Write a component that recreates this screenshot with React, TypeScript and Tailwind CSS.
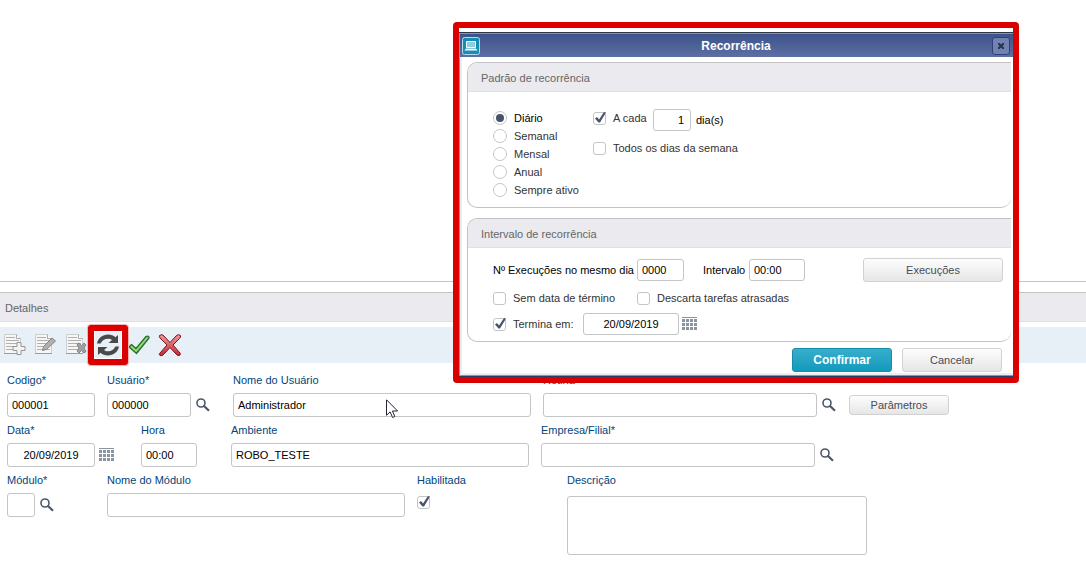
import React from "react";

const inputClass = "h-6 rounded-[3px] border border-[#c3c5c6] bg-white px-1 text-[11px] text-black outline-none";
const greyButton =
    "rounded-[3px] border border-[#d2d2d2] bg-gradient-to-b from-[#fdfdfd] to-[#e6e6e6] text-[11px] text-[#474c57]";

const SearchIcon = () => (
    <svg width="14" height="14" viewBox="0 0 14 14" fill="none" stroke="#4b576b">
        <circle cx="5" cy="5" r="4" strokeWidth="1.600" />
        <path d="M7.500 7.500L13 12.700" strokeWidth="2.200" />
    </svg>
);

const CalendarIcon = () => (
    <svg width="15" height="14" viewBox="0 0 15 14" fill="#8b94a3">
        <rect width="15" height="1" />
        {[2, 6, 10].map((y) => [0, 4, 8, 12].map((x) => <rect key={`${x}-${y}`} x={x} y={y} width="3" height="3" />))}
    </svg>
);

const SheetIcon = ({ children }: { children: React.ReactNode }) => (
    <svg width="22" height="22" viewBox="0 0 22 22">
        <path d="M.5 .5h12l4 4v15H.5z" fill="#f6f6f6" stroke="#cdcdcd" />
        <path d="M12.500 .5v4h4" fill="#fff" stroke="#a9a9a9" />
        <path d="M2 3.500h9M2 6.500h13M2 9.500h13M2 12.500h13M2 15.500h13" stroke="#b0b0b0" />
        <path d="M0 19.500h17" stroke="#9c9c9c" />
        {children}
    </svg>
);

const RefreshIcon = () => (
    <svg width="24" height="24" viewBox="0 0 24 24" fill="#4a4a4a">
        <path d="M1 10.500C2 5 6.500 1.500 12 1.500c3 0 5.500 1 7.500 2.700L22 2v8h-9.500l3.500-3c-1-.8-2.400-1.300-4-1.300-3.500 0-6 1.800-7.300 4.800z" />
        <path d="M23 13.500c-1 5.500-5.500 9-11 9-3 0-5.500-1-7.500-2.700L2 22v-8h9.500L8 17c1 .8 2.400 1.300 4 1.300 3.500 0 6-1.800 7.300-4.800z" />
    </svg>
);

const CheckIcon = () => (
    <svg width="22" height="20" viewBox="0 0 22 20">
        <path d="M1 12l2.500-2.500L8 13.500 18 1.500c1.500-1 3.500 0 3 1.500L8.500 18.500z" fill="#7cc85c" stroke="#23702a" strokeWidth="1.200" strokeLinejoin="round" />
        <path d="M3 11.500l5 4.300L19 3" fill="none" stroke="#b4e39b" />
    </svg>
);

const CrossIcon = () => (
    <svg width="24" height="24" viewBox="0 0 24 24">
        <defs>
            <linearGradient id="cross" x1="0" y1="0" x2="0" y2="1">
                <stop offset="0" stopColor="#ee9a98" />
                <stop offset="1" stopColor="#d02434" />
            </linearGradient>
        </defs>
        <path d="M1.500 2.500Q4 .5 6 3l6 6.500L18 3q2.500-2.500 4.500-.5.5 1.500-1 3L15 12l7 8q1 1.500-.5 2.500-2 .5-3.500-1.500l-6-6.500L6 21q-2 2.500-4 1.500-1.500-1 0-2.500L9 12 2 5Q1 3.500 1.500 2.500z" fill="url(#cross)" stroke="#6d1a22" />
    </svg>
);

interface CheckProps {
    id: string;
    checked?: boolean;
}

const Check = ({ id, checked }: CheckProps) => (
    <span className="relative block size-[13px] shrink-0">
        <input
            id={id}
            type="checkbox"
            defaultChecked={checked}
            className="peer block size-[13px] appearance-none rounded-[3px] border border-[#c3c5c6] bg-white"
        />
        <svg className="pointer-events-none absolute -top-px left-0 hidden peer-checked:block" width="14" height="14" viewBox="0 0 14 14" fill="#46536a">
            <path d="M2 7.500L4 6l2 2.500L11 1l2 .5L7 11.500H5.500z" />
        </svg>
    </span>
);

interface FieldProps {
    id: string;
    label: string;
    value?: string;
    width: string;
    align?: string;
    after?: React.ReactNode;
}

const Field = ({ id, label, value = "", width, align = "", after }: FieldProps) => (
    <div>
        <label htmlFor={id} className="block h-[14px] leading-[14px] whitespace-nowrap text-[#00457c]">{label}</label>
        <div className="mt-1.5 flex items-center gap-1">
            <input id={id} type="text" defaultValue={value} className={`${inputClass} ${width} ${align}`} />
            {after}
        </div>
    </div>
);

const LookupButton = ({ label }: { label: string }) => (
    <button type="button" aria-label={label} className="pl-px"><SearchIcon /></button>
);

const DateButton = ({ label }: { label: string }) => (
    <button type="button" aria-label={label}><CalendarIcon /></button>
);

const Group = ({ title, children }: { title: string; children: React.ReactNode }) => (
    <section className="overflow-hidden rounded-l-[10px] rounded-br-[10px] border border-r-0 border-[#c3c3c5] bg-white">
        <h3 className="h-[29px] border-b border-[#e0e0e4] bg-[#ebeaef] pl-[13px] leading-[30px] text-[#666]">{title}</h3>
        {children}
    </section>
);

const RecurrenceDialog = () => {
    const patterns = ["Diário", "Semanal", "Mensal", "Anual", "Sempre ativo"];

    return (
        <div role="dialog" aria-labelledby="dialog-title" className="absolute top-[22px] left-[453px] w-[566px] rounded-[4px] border-6 border-[#db0000] bg-white pt-1">
            <div className="border-t border-b border-t-[#30363f] border-b-[#263b70] bg-white">
                <div className="border-b border-l border-[#6d9bd2]">
                    <header className="flex h-6 items-center border-t border-[#8095bd] bg-gradient-to-b from-[#3d528c] to-[#5d70a3] pr-[3px] pl-0.5">
                        <svg width="18" height="18" viewBox="0 0 18 18">
                            <rect x=".5" y=".5" width="17" height="17" rx="2" fill="#168eb3" stroke="#b5dbe9" />
                            <path d="M4.500 4.500h9v6h-9z" fill="#8fcde1" stroke="#fff" />
                            <path d="M2.500 13.500h13l-1.500-2H4z" fill="#fff" />
                        </svg>
                        <h2 id="dialog-title" className="flex-1 text-center text-[12px] font-bold text-white">Recorrência</h2>
                        <button type="button" aria-label="Fechar" className="flex h-[18px] w-[18px] items-center justify-center rounded-[3px] border border-[#2d427b] bg-[#7182b0]">
                            <svg width="6" height="6" viewBox="0 0 6 6" stroke="#273252" strokeWidth="2">
                                <path d="M0 0l6 6M6 0L0 6" />
                            </svg>
                        </button>
                    </header>

                    <div className="flex flex-col gap-2.5 border-b-2 border-l-2 border-[#eeeeef] pt-[5px] pr-0.5 pl-[5px]">
                        <Group title="Padrão de recorrência">
                            <div className="flex h-[115px] pt-[17px] pl-[25px] text-[#333]">
                                <div role="radiogroup" className="w-[100px]">
                                    {patterns.map((pattern, i) => (
                                        <label key={pattern} className="flex h-[18px] items-center gap-[7px] whitespace-nowrap first:text-black">
                                            <input
                                                type="radio"
                                                name="pattern"
                                                defaultChecked={i === 0}
                                                className="size-[14px] appearance-none rounded-full border border-[#c3c5c6] bg-white bg-clip-content p-[2px] checked:bg-[#46536a]"
                                            />
                                            {pattern}
                                        </label>
                                    ))}
                                </div>
                                <div>
                                    <div className="flex items-start">
                                        <div className="flex h-[18px] items-center">
                                            <Check id="every" checked />
                                            <label htmlFor="every" className="w-[47px] pl-[7px]">A cada</label>
                                        </div>
                                        <input type="text" aria-label="Dias" defaultValue="1" className={`${inputClass} h-[22px] w-[38px] pr-1.5 text-right`} />
                                        <span className="pl-[5px] leading-[22px] text-black">dia(s)</span>
                                    </div>
                                    <div className="mt-2 flex h-[18px] items-center">
                                        <Check id="weekdays" />
                                        <label htmlFor="weekdays" className="pl-[7px]">Todos os dias da semana</label>
                                    </div>
                                </div>
                            </div>
                        </Group>

                        <Group title="Intervalo de recorrência">
                            <div className="h-[93px] pt-2.5 pr-2 pl-[25px] text-[#333]">
                                <div className="flex h-6 items-center text-black">
                                    <label htmlFor="runs" className="w-36 whitespace-nowrap">Nº Execuções no mesmo dia</label>
                                    <input id="runs" type="text" defaultValue="0000" className={`${inputClass} h-[22px] w-[47px]`} />
                                    <label htmlFor="interval" className="ml-[19px] w-[46px]">Intervalo</label>
                                    <input id="interval" type="text" defaultValue="00:00" className={`${inputClass} h-[22px] w-14`} />
                                    <button type="button" className={`${greyButton} ml-auto h-6 w-[140px]`}>Execuções</button>
                                </div>
                                <div className="mt-[7px] flex h-[18px] items-center">
                                    <Check id="endless" />
                                    <label htmlFor="endless" className="w-[131px] pl-[7px]">Sem data de término</label>
                                    <Check id="discard" />
                                    <label htmlFor="discard" className="pl-[7px]">Descarta tarefas atrasadas</label>
                                </div>
                                <div className="mt-1.5 flex h-[22px] items-center">
                                    <Check id="ends" checked />
                                    <label htmlFor="ends" className="w-[77px] pl-[7px]">Termina em:</label>
                                    <input type="text" aria-label="Data de término" defaultValue="20/09/2019" className={`${inputClass} mr-[3px] h-[22px] w-24 text-center`} />
                                    <DateButton label="Escolher data de término" />
                                </div>
                            </div>
                        </Group>

                        <footer className="-mt-1 flex justify-end gap-2.5 pr-[9px] pb-px">
                            <button type="button" className="h-6 w-[100px] rounded-[3px] border border-[#168baa] bg-gradient-to-b from-[#36aecd] to-[#109abc] text-[12px] font-bold text-white">Confirmar</button>
                            <button type="button" className={`${greyButton} h-6 w-[100px]`}>Cancelar</button>
                        </footer>
                    </div>
                </div>
            </div>
        </div>
    );
};

export default function App() {
    return (
        <div className="relative min-h-screen overflow-hidden bg-white font-['Liberation_Sans',Arial,sans-serif] text-[11px] leading-[14px]">
            <div className="h-[282px] border-b border-[#c3c3c3]" />

            <main className="mt-2.5 border-t border-[#c3c3c3]">
                <h1 className="h-[29px] border-b border-[#e0e0e4] bg-[#ebeaef] pl-[5px] leading-[30px] text-[#666]">Detalhes</h1>

                <div className="mt-[5px] flex h-9 items-center bg-[#e7eff7] pl-1">
                    <button type="button" aria-label="Incluir" className="mr-[9px]">
                        <SheetIcon>
                            <path d="M13 8.500h4v4h4v4h-4v4h-4v-4H9v-4h4z" fill="#f4f4f4" stroke="#969696" />
                        </SheetIcon>
                    </button>
                    <button type="button" aria-label="Alterar" className="mr-[9px]">
                        <SheetIcon>
                            <path d="M7.500 16.500l1-4L17 4l3.500 3-9 8.500z" fill="#b0b0b0" stroke="#858585" />
                        </SheetIcon>
                    </button>
                    <button type="button" aria-label="Excluir" className="mr-2">
                        <SheetIcon>
                            <path d="M11 10l2-1 2.500 2.500L18 9l2 2-2 3 2 3.500-2 1.500-2.500-2.500L13 19l-2-2 2-3z" fill="#a0a0a0" stroke="#858585" />
                        </SheetIcon>
                    </button>
                    <button type="button" aria-label="Recorrência" className="relative mr-2">
                        <RefreshIcon />
                        <span className="absolute -inset-x-2 -inset-y-2 rounded-[3px] border-6 border-[#db0000] ring-1 ring-[#f3b4b6] inset-ring-1 inset-ring-white" />
                    </button>
                    <button type="button" aria-label="Confirmar" className="mr-2"><CheckIcon /></button>
                    <button type="button" aria-label="Cancelar"><CrossIcon /></button>
                </div>

                <form className="mt-2.5 flex flex-col gap-1.5 pl-[7px]">
                    <div className="flex items-end">
                        <div className="flex gap-3">
                            <Field id="code" label="Codigo*" value="000001" width="w-[88px]" />
                            <Field id="user" label="Usuário*" value="000000" width="w-[84px]" after={<LookupButton label="Buscar usuário" />} />
                        </div>
                        <div className="ml-[23px] flex gap-3">
                            <Field id="user-name" label="Nome do Usuário" value="Administrador" width="w-[298px]" />
                            <Field id="routine" label="Rotina" width="w-[274px]" after={<LookupButton label="Buscar rotina" />} />
                        </div>
                        <button type="button" className={`${greyButton} mb-0.5 ml-[13px] h-5 w-[100px]`}>Parâmetros</button>
                    </div>

                    <div className="flex items-end">
                        <Field id="date" label="Data*" value="20/09/2019" width="w-[88px]" align="text-center" after={<DateButton label="Escolher data" />} />
                        <div className="ml-[27px]">
                            <Field id="time" label="Hora" value="00:00" width="w-14" />
                        </div>
                        <div className="ml-[34px] flex gap-3">
                            <Field id="environment" label="Ambiente" value="ROBO_TESTE" width="w-[298px]" />
                            <Field id="company" label="Empresa/Filial*" width="w-[274px]" after={<LookupButton label="Buscar empresa" />} />
                        </div>
                    </div>

                    <div className="flex items-start">
                        <div className="w-[100px]">
                            <Field id="module" label="Módulo*" width="w-7" after={<LookupButton label="Buscar módulo" />} />
                        </div>
                        <Field id="module-name" label="Nome do Módulo" width="w-[298px]" />
                        <div className="ml-3 w-[150px]">
                            <label htmlFor="enabled" className="mb-[9px] block text-[#00457c]">Habilitada</label>
                            <Check id="enabled" checked />
                        </div>
                        <div>
                            <label htmlFor="description" className="block text-[#00457c]">Descrição</label>
                            <textarea id="description" className="mt-[9px] block h-[59px] w-[300px] resize-none rounded-[3px] border border-[#c3c5c6] bg-white outline-none" />
                        </div>
                    </div>
                </form>
            </main>

            <RecurrenceDialog />

            <svg className="pointer-events-none absolute top-[399px] left-[386px]" width="13" height="20" viewBox="0 0 13 20">
                <path d="M.5.8v15.500l3.600-3.400 2.500 5.600 2.200-1-2.400-5.500h5.200z" fill="#fff" stroke="#222433" />
            </svg>
        </div>
    );
}
